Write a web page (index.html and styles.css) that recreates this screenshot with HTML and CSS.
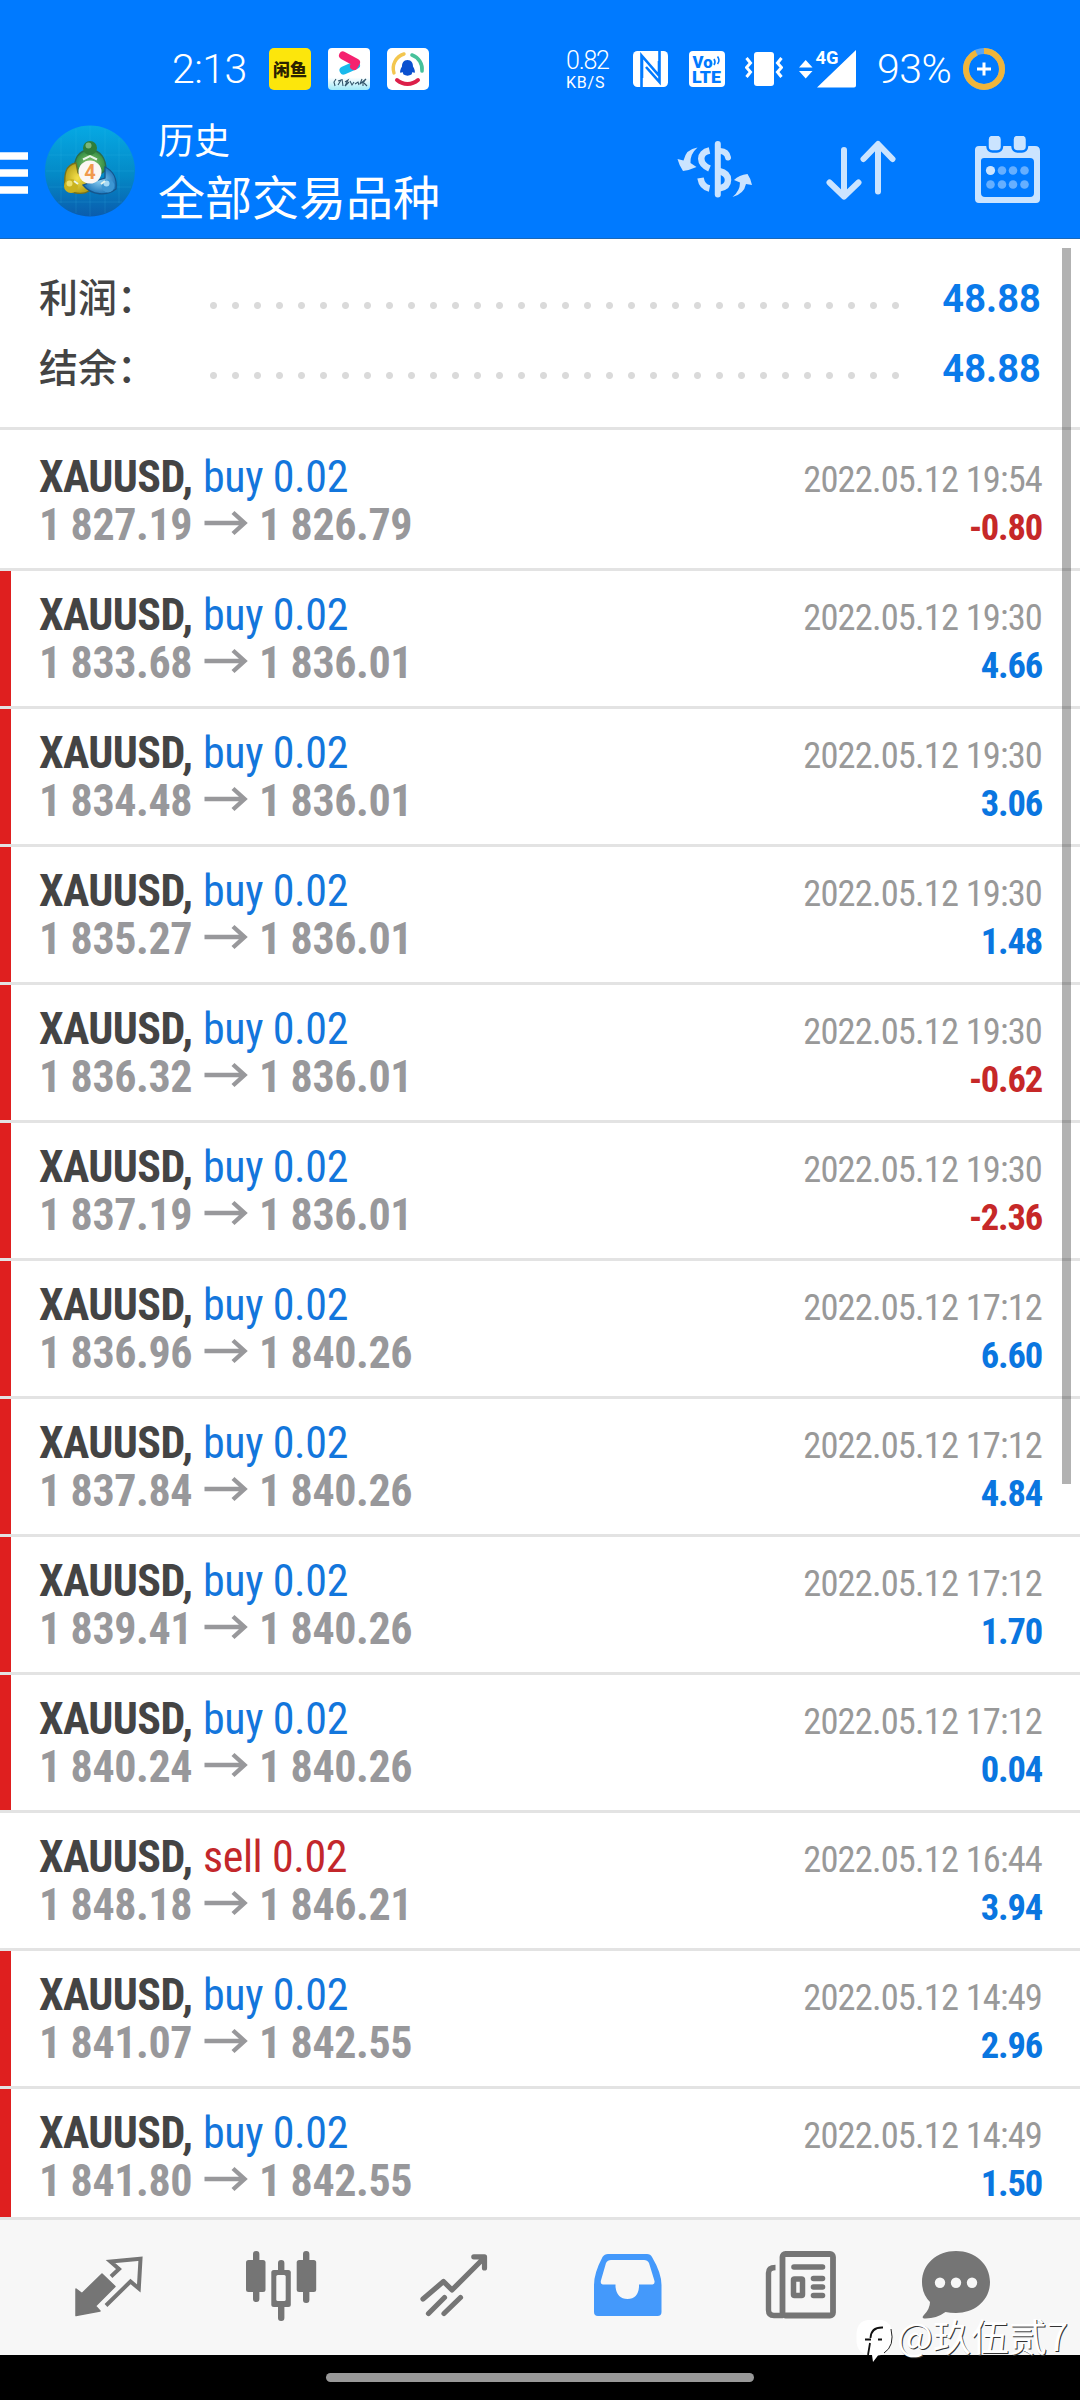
FILE: index.html
```html
<!DOCTYPE html>
<html lang="zh-CN">
<head>
<meta charset="utf-8">
<title>历史</title>
<link rel="stylesheet" href="styles.css">
</head>
<body>
<svg class="defs" width="0" height="0">
  <symbol id="arrow" viewBox="0 0 44 26"><path d="M0.500 13H41M29 2.500L40.500 13L29 23.500" fill="none" stroke="currentColor" stroke-width="4.400"/></symbol>
</svg>
<div class="screen">
  <header class="top">
    <div class="status">
      <div class="status-left">
        <span class="clock">2:13</span>
        <span class="app app-fish">闲鱼</span>
        <svg class="app" viewBox="0 0 42 42"><defs><linearGradient id="fade" x1="0" y1="0" x2="0" y2="1"><stop offset=".7" stop-color="#fff"/><stop offset="1" stop-color="#9fe9f8"/></linearGradient></defs><rect width="42" height="42" rx="4" fill="url(#fade)"/><path d="M15.500 22.500L28 17" stroke="#19b9ec" stroke-width="8" stroke-linecap="round"/><path d="M15 7.500L28 14.500L26 18" fill="none" stroke="#f5216f" stroke-width="8" stroke-linecap="round" stroke-linejoin="round"/><path d="M8 31l-2 3 1 4M10 33l3-1-3 5M14 31l1 7M17 34l3-2-3 6 4-4M22 33l2 4 2-3M27 36l3-2 1 3M34 31l-2 5 6-5-3 4v3M36 35l3 3" fill="none" stroke="#33566b" stroke-width="1.100"/></svg>
        <svg class="app" viewBox="0 0 42 42"><rect width="42" height="42" rx="5" fill="#fff"/><path d="M7 25A15 15 0 0 1 17 6" fill="none" stroke="#f3c64e" stroke-width="3.400" stroke-linecap="round"/><path d="M25 7A15 15 0 0 1 35 23" fill="none" stroke="#46c19a" stroke-width="3.600" stroke-linecap="round"/><path d="M10 32A16 16 0 0 0 31 32" fill="none" stroke="#dc1f49" stroke-width="4" stroke-linecap="round"/><path d="M20.500 12c-4 0-5.500 3-5.500 6.500-1.500 2.500-2.500 5-1.500 6.500l2-1 1 2.500c2.500 1.500 5.500 1.500 8 0l1-2.500 2 1c1-1.500 0-4-1.500-6.500 0-3.500-1.500-6.500-5.500-6.500z" fill="#0b50cf"/></svg>
      </div>
      <div class="status-right">
        <span class="net"><b>0.82</b><i>KB/S</i></span>
        <svg class="nfc" width="35" height="36" viewBox="0 0 35 36"><rect width="35" height="36" rx="4.500" fill="#fff"/><path d="M8.500 36V4.500L26 24.500V10M9 4.500V27M26.500 0V31L13 16" fill="none" stroke="#007aff" stroke-width="2.600"/></svg>
        <svg class="volte" width="36" height="36" viewBox="0 0 36 36"><rect width="36" height="36" rx="4" fill="#fff"/><text x="3.500" y="16.500" font-size="17" textLength="20" lengthAdjust="spacingAndGlyphs">Vo</text><text x="3" y="32" font-size="17" textLength="29" lengthAdjust="spacingAndGlyphs">LTE</text><path d="M25 8q2 3 0 6M28.500 5.500q3 4 0 7.500" fill="none" stroke="#007aff" stroke-width="1.600"/></svg>
        <svg class="vibrate" width="38" height="36" viewBox="0 0 38 36"><rect x="9" y="1" width="20" height="34" rx="3" fill="#fff"/><path d="M1.500 7l4 5-4 4.500 4 4.500-4 5M36.500 7l-4 5 4 4.500-4 4.500 4 5" fill="none" stroke="#fff" stroke-width="3"/></svg>
        <svg class="signal" width="58" height="48" viewBox="0 -4 58 48"><path d="M0 18.500L6.700 11L13.500 18.500zM0 22L6.700 29.500L13.500 22zM18 38.500L57 1V36.500Q57 38.500 55 38.500z" fill="#fff"/><text class="gen" x="16.500" y="15" font-size="18" textLength="23" lengthAdjust="spacingAndGlyphs">4G</text></svg>
        <span class="clock">93%</span>
        <svg class="ring" width="42" height="42" viewBox="0 0 42 42"><circle cx="21" cy="21" r="18" fill="none" stroke="#5aa6f5" stroke-width="6"/><circle cx="21" cy="21" r="18" fill="none" stroke="#f0b53a" stroke-width="6" pathLength="100" stroke-dasharray="93 7" transform="rotate(-90 21 21)"/><path d="M21 14.500v13M14 21h14" stroke="#fff" stroke-width="3"/></svg>
      </div>
    </div>
    <div class="bar">
      <svg class="menu" width="28" height="42" viewBox="0 0 28 42"><path d="M0 4H28M0 21H28M0 38H28" stroke="#fff" stroke-width="7.600"/></svg>
      <svg class="logo" width="90" height="92" viewBox="0 0 90 92">
        <defs>
          <linearGradient id="disc" x1="0" y1="0" x2="0" y2="1"><stop offset="0" stop-color="#06a9e4"/><stop offset=".55" stop-color="#0489c6"/><stop offset="1" stop-color="#0a5cad"/></linearGradient>
          <radialGradient id="green"><stop offset="0" stop-color="#8fca72"/><stop offset="1" stop-color="#2f8b42"/></radialGradient>
          <radialGradient id="gold"><stop offset="0" stop-color="#f5e04a"/><stop offset="1" stop-color="#b9a41c"/></radialGradient>
          <radialGradient id="sky"><stop offset="0" stop-color="#8ccff2"/><stop offset="1" stop-color="#1e77bb"/></radialGradient>
        </defs>
        <ellipse cx="45" cy="46" rx="45" ry="45.500" fill="url(#disc)"/>
        <path d="M4 30H86M1 46H89M4 62H86M13 77H77M16 13V78M31 4V88M45 1V91M60 4V88M74 13V78" stroke="#4cc6f0" stroke-opacity=".15"/>
        <path d="M45 25C33 25 29 34 29.500 45L40 52L53 51L61 45C61 34 56 25 45 25z" fill="url(#green)" stroke="#2c6b4c" stroke-width="1.300"/>
        <path d="M31 38C20 40 19 50 20 63C27 69 38 70 44 66L45 58L33 48z" fill="url(#gold)" stroke="#75711c" stroke-width="1.300"/>
        <path d="M60 42C69 46 72 55 71 64C62 71 47 71 38 60L47 57L60 53z" fill="url(#sky)" stroke="#15558c" stroke-width="1.300"/>
        <circle cx="45" cy="23" r="7" fill="#2f7e3a"/><circle cx="43.500" cy="20.500" r="3" fill="#7ab67c"/>
        <circle cx="26" cy="61" r="7" fill="#c9b21f"/><circle cx="24.500" cy="58.500" r="3" fill="#efe06a"/>
        <circle cx="63" cy="61" r="6.500" fill="#3d96d2"/><circle cx="61.500" cy="58.500" r="3" fill="#a5d9f5"/>
        <path d="M38 34.500L45 31L52 34.500M33 59L29 56M56 59L60 56" stroke="#e9f6ea" stroke-width="2" fill="none"/>
        <circle cx="45" cy="47" r="11.500" fill="#fbf7f3"/>
        <text x="45" y="54" text-anchor="middle" font-size="20" font-weight="700" fill="#f09a4c">4</text>
      </svg>
      <div class="titles">
        <div class="title-small">历史</div>
        <div class="title-big">全部交易品种</div>
      </div>
      <div class="actions">
        <svg width="78" height="62" viewBox="676 138 78 62" fill="none" stroke="#cbe4ff">
          <path d="M717.800 144V194.500" stroke-width="6" stroke-linecap="round"/>
          <path d="M709.500 150.500C698 153 699 164 709.500 168.500M700.500 178Q702 187 709.500 188.500" stroke-width="6.500"/>
          <path d="M720 151Q727 151.500 728 157.500" stroke-width="6" stroke-linecap="round"/>
          <path d="M719 171Q728 173 728 180Q728 187 719 188.500" stroke-width="6.500"/>
          <path d="M697.500 147.500Q686 149 683.500 160.500L677.500 159Q679 165 683 171Q690 170 696.500 167L690.500 163Q690 154 697.500 147.500z" fill="#cbe4ff" stroke="none"/>
          <path d="M732.500 197Q744 194 746 184L752 185Q751 179 747.500 174Q739 175 734 180L740 182.500Q740 191 732.500 197z" fill="#cbe4ff" stroke="none"/>
        </svg>
        <svg width="70" height="62" viewBox="826 138 70 62" fill="none" stroke="#cbe4ff" stroke-width="6" stroke-linecap="round" stroke-linejoin="round"><path d="M844 150V196M829.500 182.500L844 196.500L858.500 182.500M878 191.500V146M863.500 159L878 144L892.500 159"/></svg>
        <svg width="66" height="68" viewBox="974 136 66 68"><path fill="#cbe4ff" fill-rule="evenodd" d="M979 146H1035Q1040 146 1040 151V199Q1040 203 1036 203H979Q975 203 975 199V150Q975 146 979 146zM984 158Q981 158 981 161V193Q981 197 985 197H1030Q1034 197 1034 193V162Q1034 158 1030 158z"/><g fill="#cbe4ff" stroke="#007aff" stroke-width="2.500"><rect x="987.500" y="134.500" width="14.500" height="17" rx="5"/><rect x="1012.500" y="134.500" width="14.500" height="17" rx="5"/></g><circle cx="990.500" cy="170.500" r="4.600" fill="#cbe4ff"/><g fill="#66afff"><circle cx="1002" cy="170.500" r="4.300"/><circle cx="1013" cy="170.500" r="4.300"/><circle cx="1024.500" cy="170.500" r="4.300"/><circle cx="990.500" cy="184.500" r="4.300"/><circle cx="1002" cy="184.500" r="4.300"/><circle cx="1013" cy="184.500" r="4.300"/><circle cx="1024.500" cy="184.500" r="4.300"/></g></svg>
      </div>
    </div>
  </header>

  <main class="list">
    <section class="summary">
      <div class="sum"><span class="label">利润：</span><span class="dots"></span><span class="total">48.88</span></div>
      <div class="sum"><span class="label">结余：</span><span class="dots"></span><span class="total">48.88</span></div>
    </section>
    <article class="deal first">
      <div class="line"><span class="sym">XAUUSD,</span><span class="side buy">buy 0.02</span><time>2022.05.12 19:54</time></div>
      <div class="line"><span class="price">1 827.19</span><svg class="to"><use href="#arrow"/></svg><span class="price">1 826.79</span><span class="profit loss">-0.80</span></div>
    </article>
    <article class="deal marked">
      <div class="line"><span class="sym">XAUUSD,</span><span class="side buy">buy 0.02</span><time>2022.05.12 19:30</time></div>
      <div class="line"><span class="price">1 833.68</span><svg class="to"><use href="#arrow"/></svg><span class="price">1 836.01</span><span class="profit">4.66</span></div>
    </article>
    <article class="deal marked">
      <div class="line"><span class="sym">XAUUSD,</span><span class="side buy">buy 0.02</span><time>2022.05.12 19:30</time></div>
      <div class="line"><span class="price">1 834.48</span><svg class="to"><use href="#arrow"/></svg><span class="price">1 836.01</span><span class="profit">3.06</span></div>
    </article>
    <article class="deal marked">
      <div class="line"><span class="sym">XAUUSD,</span><span class="side buy">buy 0.02</span><time>2022.05.12 19:30</time></div>
      <div class="line"><span class="price">1 835.27</span><svg class="to"><use href="#arrow"/></svg><span class="price">1 836.01</span><span class="profit">1.48</span></div>
    </article>
    <article class="deal marked">
      <div class="line"><span class="sym">XAUUSD,</span><span class="side buy">buy 0.02</span><time>2022.05.12 19:30</time></div>
      <div class="line"><span class="price">1 836.32</span><svg class="to"><use href="#arrow"/></svg><span class="price">1 836.01</span><span class="profit loss">-0.62</span></div>
    </article>
    <article class="deal marked">
      <div class="line"><span class="sym">XAUUSD,</span><span class="side buy">buy 0.02</span><time>2022.05.12 19:30</time></div>
      <div class="line"><span class="price">1 837.19</span><svg class="to"><use href="#arrow"/></svg><span class="price">1 836.01</span><span class="profit loss">-2.36</span></div>
    </article>
    <article class="deal marked">
      <div class="line"><span class="sym">XAUUSD,</span><span class="side buy">buy 0.02</span><time>2022.05.12 17:12</time></div>
      <div class="line"><span class="price">1 836.96</span><svg class="to"><use href="#arrow"/></svg><span class="price">1 840.26</span><span class="profit">6.60</span></div>
    </article>
    <article class="deal marked">
      <div class="line"><span class="sym">XAUUSD,</span><span class="side buy">buy 0.02</span><time>2022.05.12 17:12</time></div>
      <div class="line"><span class="price">1 837.84</span><svg class="to"><use href="#arrow"/></svg><span class="price">1 840.26</span><span class="profit">4.84</span></div>
    </article>
    <article class="deal marked">
      <div class="line"><span class="sym">XAUUSD,</span><span class="side buy">buy 0.02</span><time>2022.05.12 17:12</time></div>
      <div class="line"><span class="price">1 839.41</span><svg class="to"><use href="#arrow"/></svg><span class="price">1 840.26</span><span class="profit">1.70</span></div>
    </article>
    <article class="deal marked">
      <div class="line"><span class="sym">XAUUSD,</span><span class="side buy">buy 0.02</span><time>2022.05.12 17:12</time></div>
      <div class="line"><span class="price">1 840.24</span><svg class="to"><use href="#arrow"/></svg><span class="price">1 840.26</span><span class="profit">0.04</span></div>
    </article>
    <article class="deal">
      <div class="line"><span class="sym">XAUUSD,</span><span class="side sell">sell 0.02</span><time>2022.05.12 16:44</time></div>
      <div class="line"><span class="price">1 848.18</span><svg class="to"><use href="#arrow"/></svg><span class="price">1 846.21</span><span class="profit">3.94</span></div>
    </article>
    <article class="deal marked">
      <div class="line"><span class="sym">XAUUSD,</span><span class="side buy">buy 0.02</span><time>2022.05.12 14:49</time></div>
      <div class="line"><span class="price">1 841.07</span><svg class="to"><use href="#arrow"/></svg><span class="price">1 842.55</span><span class="profit">2.96</span></div>
    </article>
    <article class="deal marked">
      <div class="line"><span class="sym">XAUUSD,</span><span class="side buy">buy 0.02</span><time>2022.05.12 14:49</time></div>
      <div class="line"><span class="price">1 841.80</span><svg class="to"><use href="#arrow"/></svg><span class="price">1 842.55</span><span class="profit">1.50</span></div>
    </article>
    <div class="scrollbar"></div>
  </main>

  <nav class="tabs">
    <svg width="72" height="76" viewBox="72 2248 72 76"><path d="M76 2289L82 2293.500L102 2274L115 2286.500L95.500 2306L100 2311L76 2315.500z" fill="#757575" stroke="#757575" stroke-width="1.500" stroke-linejoin="round"/><path d="M111 2276.500L119 2269L110.500 2261.500L140.500 2258.800L138.800 2288.500L130.500 2281.500L106 2305.500" fill="none" stroke="#757575" stroke-width="4"/></svg>
    <svg width="72" height="76" viewBox="245 2248 72 76"><g fill="#757575"><rect x="253" y="2251" width="6.400" height="51" rx="3"/><rect x="303" y="2251" width="6.400" height="52" rx="3"/><rect x="278" y="2260" width="6.400" height="61" rx="3"/><rect x="246" y="2260" width="19.500" height="32" rx="2.500"/><rect x="296.700" y="2260" width="19.500" height="32" rx="2.500"/><rect x="271.300" y="2270" width="19.500" height="37" rx="2.500"/></g><rect x="276.300" y="2275" width="9.400" height="26" rx="1.500" fill="#f7f7f7"/></svg>
    <svg width="72" height="76" viewBox="418 2248 72 76" fill="none" stroke="#757575" stroke-width="5.200" stroke-linecap="round" stroke-linejoin="round"><path d="M423 2299L443.500 2281.500L452 2290L483 2259M473.800 2256.800H484.500V2268M428.500 2313.500L444.500 2297.500M444 2313.500L460.500 2297.500"/></svg>
    <svg width="72" height="76" viewBox="591 2248 72 76"><path fill="#4499fb" fill-rule="evenodd" d="M608 2254H647Q650.500 2254 652 2257Q661.500 2273 661.500 2285V2312Q661.500 2316 657.500 2316H598Q594 2316 594 2312V2285Q594 2273 602.500 2257Q604.500 2254 608 2254zM611 2260Q607.500 2260 606 2263L600.800 2281Q600.500 2284.500 603 2284.500H615.500V2287Q617 2299 627.500 2299Q638 2299 639 2287V2284.500H652.500Q655 2284.500 654.500 2281L649 2263Q647.500 2260 644 2260z"/></svg>
    <svg width="72" height="76" viewBox="764 2248 72 76"><g fill="none" stroke="#757575"><rect x="782.500" y="2254" width="50.500" height="61.500" rx="3" stroke-width="5.800"/><path d="M775.500 2267.500Q768.500 2267.500 768.500 2273V2310Q768.500 2315.500 774 2315.500H783" stroke-width="5.400"/><rect x="793.500" y="2279" width="9" height="16.500" rx="1" stroke-width="5.500"/><path d="M794 2267H822.500M813.500 2278.500H822.500M813.500 2287H822.500M813.500 2295.500H822.500" stroke-width="5.600" stroke-linecap="round"/></g></svg>
    <svg width="72" height="76" viewBox="917 2248 72 76"><path d="M955 2251C974 2251 989 2264 989 2282S974 2313 955 2313Q949 2313 944.500 2312Q935 2319 923 2318.500Q920.500 2318 922.500 2315.500Q929 2309 929 2302Q921 2294 921 2282C921 2264 936 2251 955 2251z" fill="#757575"/><g fill="#f7f7f7"><circle cx="939" cy="2282.800" r="5.200"/><circle cx="955" cy="2282.800" r="5.200"/><circle cx="971" cy="2282.800" r="5.200"/></g></svg>
  </nav>
  <div class="gesture"><div class="handle"></div></div>
  <div class="stamp">
    <svg width="38" height="46" viewBox="0 0 38 46"><path d="M12 1H26Q36 3 36 15V22Q35 35 22 36.500L17 43L16 36Q1 36 0.500 22V15Q1 2 12 1z" fill="#fff"/><path d="M35 10Q39 27 28 34" fill="none" stroke="#222" stroke-width="1"/><path d="M27 8.500Q15 8 14.500 19M9 20.500H15M22 20.500H26M14 24L12 36" fill="none" stroke="#111" stroke-width="1.800"/></svg>
    <span>@玖伍贰7</span>
  </div>
</div>
</body>
</html>
```
FILE: styles.css
```css
* { box-sizing: border-box; }
body {
  margin: 0;
  font-family: Roboto, "Noto Sans CJK SC", sans-serif;
  background: #000;
}
.defs { position: absolute; }
svg { display: block; flex: none; }
.screen {
  position: relative;
  width: 1080px;
  height: 2400px;
  display: flex;
  flex-direction: column;
  overflow: hidden;
}

/* header */
.top {
  height: 239px;
  background: #007aff;
  border-bottom: 1px solid #1a68b8;
  color: #fff;
}
.status {
  height: 108px;
  padding: 30px 75px 0 172px;
  display: flex;
  justify-content: space-between;
}
.status-left, .status-right { display: flex; align-items: center; height: 78px; }
.clock { font-size: 41px; font-weight: 300; letter-spacing: -0.5px; }
.status-left .clock { width: 97px; }
.app { width: 42px; height: 42px; margin-right: 17px; }
.app-fish {
  border-radius: 5px;
  background: #fce60c;
  color: #2b2200;
  font: 900 17px/42px "Noto Sans CJK SC", sans-serif;
  text-align: center;
}
.net { width: 67px; display: flex; flex-direction: column; font-weight: 300; }
.net b { font-size: 25px; line-height: 26px; font-weight: 300; letter-spacing: -1.2px; }
.net i { font-size: 16px; line-height: 17px; font-style: normal; font-weight: 400; letter-spacing: 0.8px; }
.nfc { margin-right: 21px; }
.volte { margin-right: 20px; fill: #007aff; font-weight: 900; }
.vibrate { margin-right: 16px; }
.signal { margin-right: 20px; }
.gen { fill: #fff; font-weight: 700; }
.status-right .clock { width: 86px; }
.bar { display: flex; height: 130px; }
.menu { margin: 44px 17px 0 0; }
.logo { margin-top: 17px; }
.titles { margin-left: 23px; padding-top: 8px; }
.title-small, .title-big { font-family: "Noto Sans CJK SC", sans-serif; font-weight: 400; }
.title-small { font-size: 36px; line-height: 44px; }
.title-big { font-size: 47px; line-height: 69px; }
.actions {
  flex: 1;
  display: flex;
  justify-content: flex-end;
  align-items: flex-start;
  padding: 28px 40px 0 0;
  gap: 72px;
}
.actions svg:nth-child(-n+2) { margin-top: 2px; }
.actions svg:nth-child(2) { margin-right: 6px; }

/* history list */
.list {
  position: relative;
  height: 1978px;
  background: #fff;
  overflow: hidden;
}
.summary {
  height: 191px;
  padding: 23px 39px 0;
  border-bottom: 3px solid #e3e3e3;
}
.sum { display: flex; align-items: center; height: 70px; }
.label { width: 171px; margin-top: -4px; font: 500 39px/66px "Noto Sans CJK SC", sans-serif; color: #444; }
.dots {
  width: 704px;
  height: 7px;
  margin-top: 17px;
  background: radial-gradient(circle at 3.5px 3.5px, #dadada 3px, transparent 4px) 0 0 / 22px 7px;
}
.total { flex: 1; text-align: right; font-size: 38px; font-weight: 700; letter-spacing: 0.1px; color: #0a7aea; padding-top: 4px; }
.deal {
  height: 138px;
  padding: 20px 38px 0 39px;
  border-bottom: 3px solid #e3e3e3;
  font-family: "Roboto Condensed", sans-serif;
  font-size: 44px;
}
.first { height: 141px; padding-top: 23px; }
.marked { background: linear-gradient(#df1f1f, #df1f1f) 0 0 / 11px 100% no-repeat; }
.line { display: flex; align-items: baseline; height: 48px; line-height: 48px; white-space: pre; }
.sym { width: 164px; font-weight: 700; color: #444; letter-spacing: -0.6px; }
.side { letter-spacing: -0.4px; }
.buy { color: #1376dc; }
.sell { color: #c3272b; }
time { margin-left: auto; font-size: 36.5px; color: #999; letter-spacing: -0.85px; }
.price { width: 154px; font-weight: 700; color: #98989b; letter-spacing: -0.4px; }
.to { width: 44px; height: 26px; align-self: flex-start; margin: 9px 11px 0 11px; color: #98989b; }
.profit { margin-left: auto; font-size: 36.5px; font-weight: 700; color: #0a76e0; letter-spacing: -1.2px; }
.loss { color: #c62828; }
.scrollbar {
  position: absolute;
  top: 9px;
  right: 9px;
  width: 9px;
  height: 1236px;
  background: rgba(0, 0, 0, 0.3);
}

/* bottom bar */
.tabs {
  height: 138px;
  padding: 28px 90px 0 72px;
  border-top: 3px solid #e3e3e3;
  background: #f7f7f7;
  display: flex;
  gap: 101px;
}
.tabs svg:last-child { margin-left: -19px; }
.gesture { flex: 1; background: #000; display: flex; justify-content: center; padding-top: 18px; }
.handle { width: 428px; height: 9px; border-radius: 5px; background: #999; }

/* watermark over the bottom edge */
.stamp {
  position: absolute;
  left: 856px;
  top: 2319px;
  display: flex;
  color: #fff;
  font: 400 38px/38px "Noto Sans CJK SC", sans-serif;
  text-shadow: 1px 1px 0.5px #333;
  white-space: nowrap;
}
.stamp span { margin: -3px 0 0 3px; }
```
